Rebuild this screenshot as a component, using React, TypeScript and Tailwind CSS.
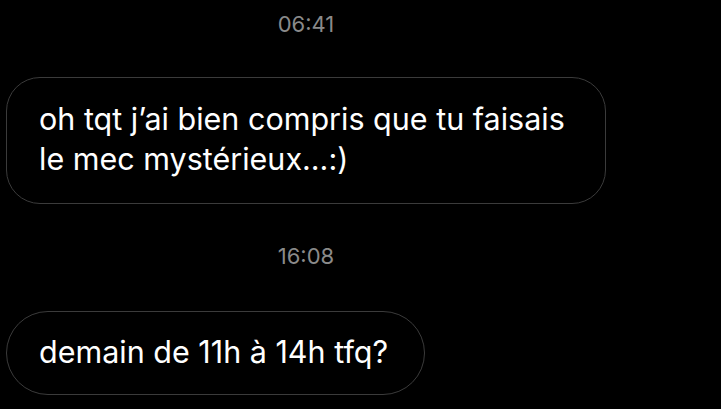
import React from "react";

const Stamp = ({ time, className }: { time: string; className?: string }) => (
  <div className={`text-center text-[22px] leading-6 text-[#8a8a8a] ${className ?? ""}`}>{time}</div>
);

const Bubble = ({ children, className }: { children: React.ReactNode; className?: string }) => (
  <div
    className={`border-[1.5px] border-[#3b3b3b] bg-black text-white text-[30.5px] leading-10 pl-8 ${className ?? ""}`}
  >
    {children}
  </div>
);

export default function App() {
  return (
    <div
      className="w-[721px] h-[409px] overflow-hidden bg-black"
      style={{ fontFamily: "Inter, 'Noto Sans', sans-serif" }}
    >
      <div className="ml-[6px] w-[600px] pt-[12px] flex flex-col">
        <Stamp time="06:41" />
        <Bubble className="mt-[41px] w-[600px] rounded-[34px] pt-[21px] pb-[24px]">
          oh tqt j’ai bien compris que tu faisais
          <br />
          le mec mystérieux...:)
        </Bubble>
        <Stamp time="16:08" className="mt-[40px]" />
        <Bubble className="mt-[43px] w-[419px] rounded-full pt-[20px] pb-[22px]">
          demain de 11h à 14h tfq?
        </Bubble>
      </div>
    </div>
  );
}
